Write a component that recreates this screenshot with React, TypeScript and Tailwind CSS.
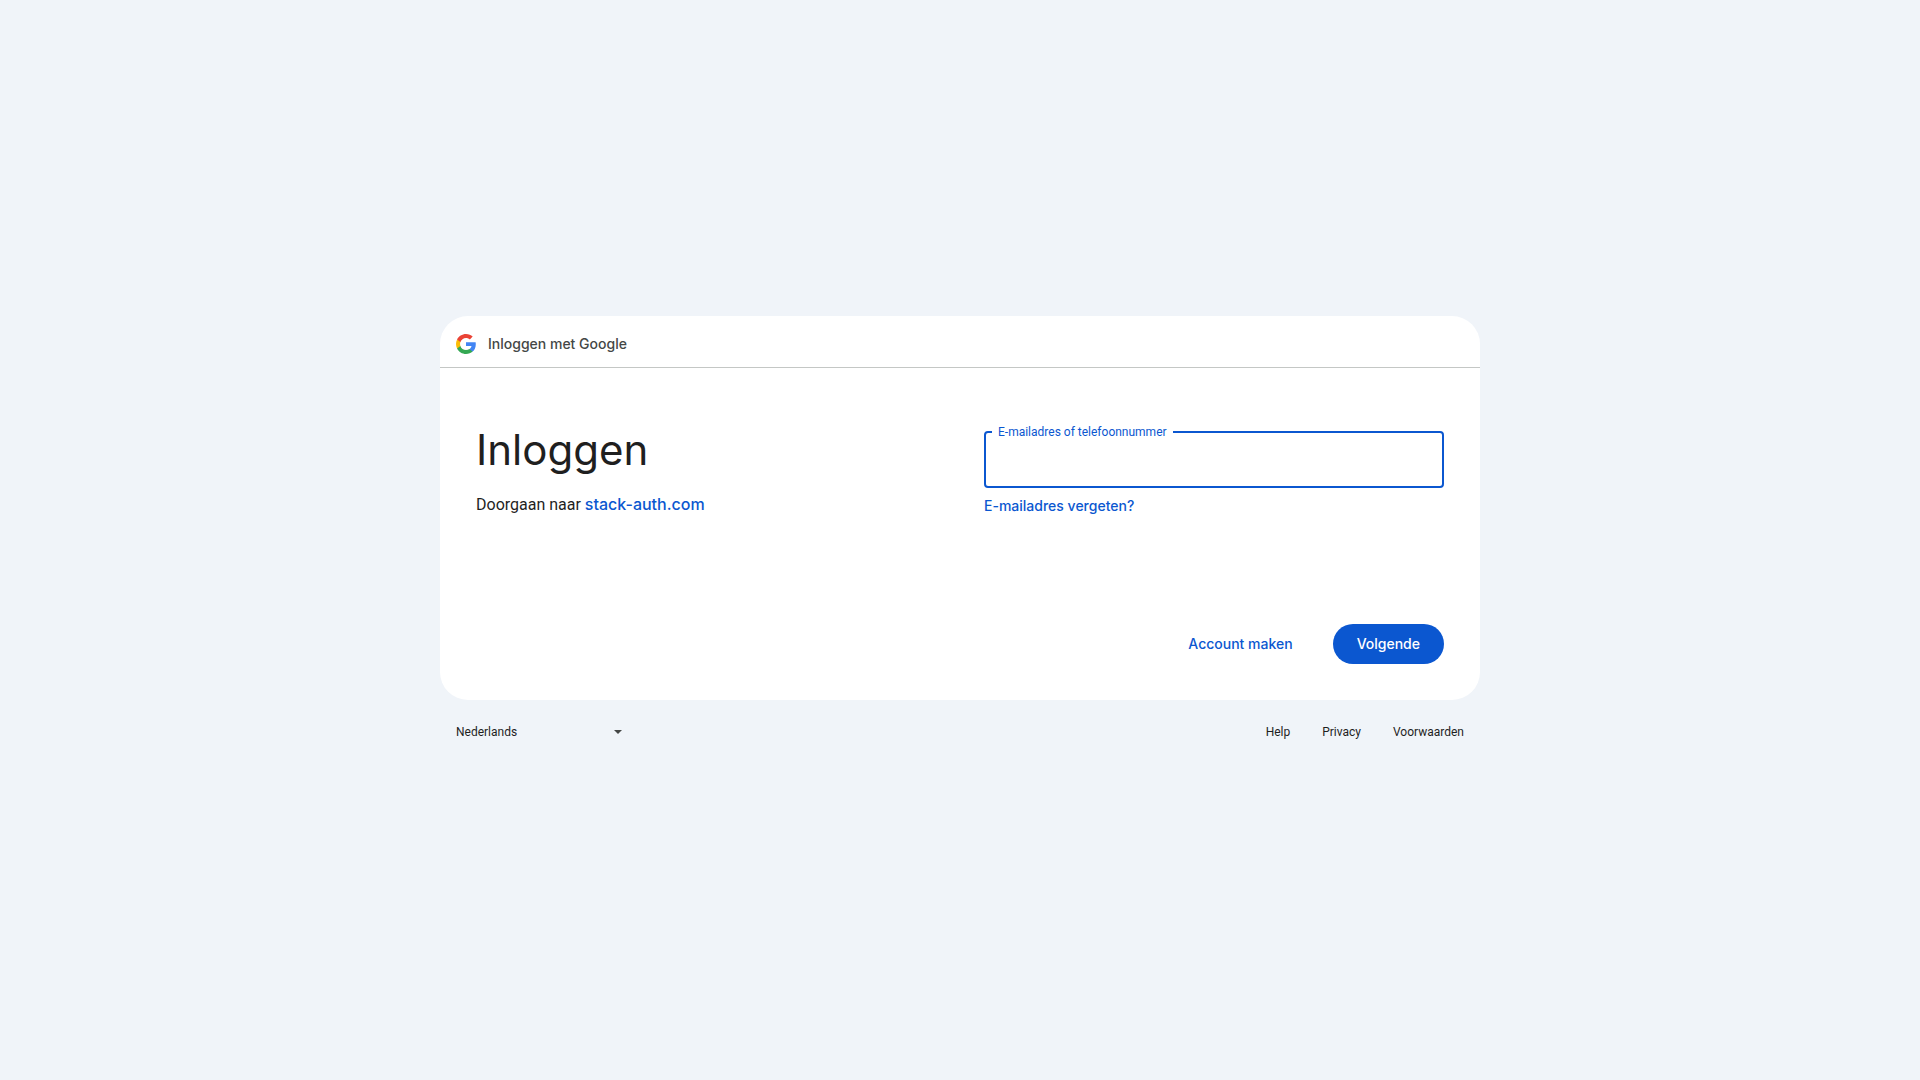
function GoogleLogo() {
  return (
    <svg viewBox="0 0 48 48" className="size-5 shrink-0" aria-hidden="true">
      <path fill="#4285F4" d="M47.5 24.55c0-1.7-.15-3.34-.43-4.91H24v9.3h13.2c-.57 3-2.3 5.54-4.88 7.24v6.03h7.9c4.62-4.26 7.28-10.53 7.28-17.66z" />
      <path fill="#34A853" d="M24 48c6.48 0 11.93-2.13 15.89-5.81l-7.73-6c-2.15 1.45-4.92 2.3-8.16 2.3-6.26 0-11.57-4.22-13.47-9.91H2.56v6.19C6.51 42.62 14.62 48 24 48z" />
      <path fill="#FBBC05" d="M10.53 28.59c-.48-1.45-.76-2.99-.76-4.59s.27-3.14.76-4.59v-6.19H2.56C.92 16.46 0 20.12 0 24s.92 7.54 2.56 10.78z" />
      <path fill="#EA4335" d="M24 9.5c3.54 0 6.71 1.22 9.21 3.6l6.85-6.85C35.9 2.38 30.47 0 24 0 14.62 0 6.51 5.38 2.56 13.22l7.98 6.19C12.43 13.72 17.74 9.5 24 9.5z" />
    </svg>
  );
}

const footerLinks = ["Help", "Privacy", "Voorwaarden"];

export default function App() {
  return (
    <div className="flex min-h-screen flex-col items-center justify-center bg-[#f0f4f9] font-[Roboto,sans-serif] text-[#1f1f1f]">
      <div className="w-full max-w-[1040px]">
        <main className="overflow-hidden rounded-[28px] bg-white">
          <header className="flex items-center gap-3 border-b border-[#c4c7c5] px-4 pt-[18px] pb-[13px]">
            <GoogleLogo />
            <span className="font-[Inter,sans-serif] text-sm font-medium text-[#444746]">Inloggen met Google</span>
          </header>
          <form className="px-9 pt-14 pb-9" onSubmit={(e) => e.preventDefault()}>
            <div className="grid min-h-[200px] grid-cols-2 gap-12">
              <div>
                <h1 className="font-[Inter,sans-serif] text-[42px] leading-[52px]">Inloggen</h1>
                <p className="mt-4 text-base">
                  Doorgaan naar{" "}
                  <a href="#app" className="font-[Inter,sans-serif] font-medium text-[#0b57d0]">stack-auth.com</a>
                </p>
              </div>
              <div>
                <fieldset className="h-16 rounded border-2 border-[#0b57d0] px-1.5">
                  <legend className="px-1.5 text-xs text-[#0b57d0]">
                    <label htmlFor="identifier">E-mailadres of telefoonnummer</label>
                  </legend>
                  <input id="identifier" type="email" className="h-10 w-full bg-transparent px-1.5 text-base outline-none" />
                </fieldset>
                <a href="#forgot" className="mt-2 inline-block font-[Inter,sans-serif] text-sm font-medium text-[#0b57d0]">E-mailadres vergeten?</a>
              </div>
            </div>
            <div className="flex items-center justify-end gap-6 font-[Inter,sans-serif] text-sm font-medium">
              <button type="button" className="h-10 rounded-full px-4 text-[#0b57d0]">Account maken</button>
              <button type="submit" className="h-10 rounded-full bg-[#0b57d0] px-6 text-white">Volgende</button>
            </div>
          </form>
        </main>
        <footer className="flex h-16 items-center justify-between px-4 text-xs">
          <div className="relative w-[174px]">
            <select aria-label="Taal wijzigen" className="w-full appearance-none bg-transparent outline-none">
              <option>Nederlands</option>
            </select>
            <svg viewBox="0 0 8 4" className="pointer-events-none absolute top-1/2 right-2 h-1 w-2 -translate-y-1/2" aria-hidden="true">
              <path d="M0 0h8L4 4z" fill="#444746" />
            </svg>
          </div>
          <nav className="flex gap-8">
            {footerLinks.map((label) => (
              <a key={label} href={"#" + label.toLowerCase()}>{label}</a>
            ))}
          </nav>
        </footer>
      </div>
    </div>
  );
}
